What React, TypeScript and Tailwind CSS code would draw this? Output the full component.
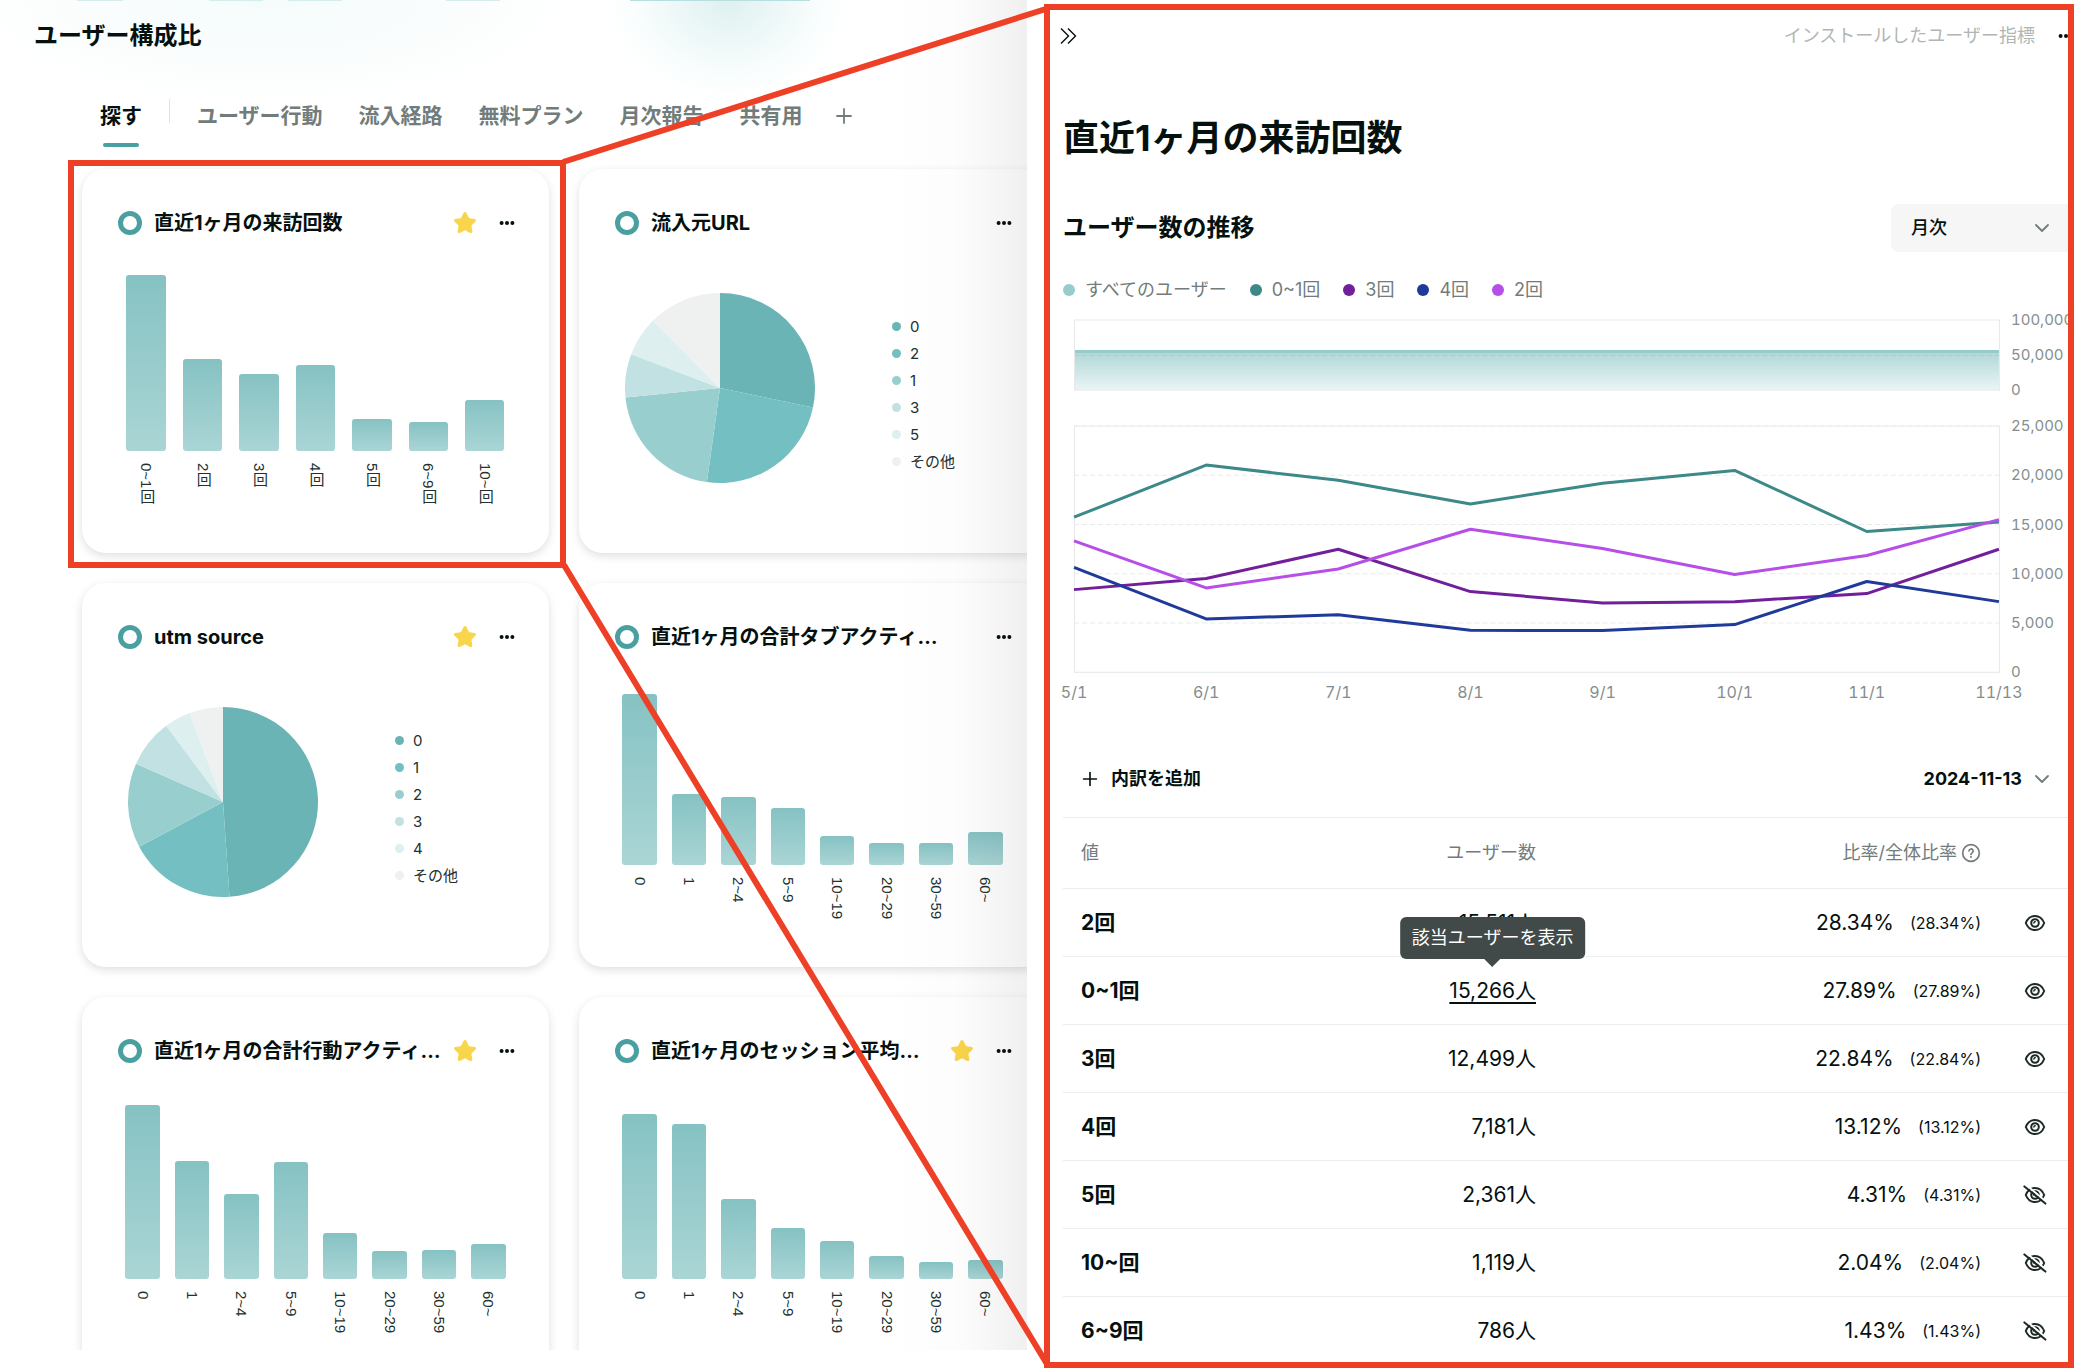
import { ChevronDown, Plus, Star } from 'lucide-react';

type Slice = { label: string; share: number };
type Bar = { label: string; height: number };

type Card = {
  title: string;
  starred: boolean;
  selected?: boolean;
  bars?: Bar[];
  slices?: Slice[];
};

const tabs = ['ユーザー行動', '流入経路', '無料プラン', '月次報告', '共有用'];

const activityLabels = ['0', '1', '2~4', '5~9', '10~19', '20~29', '30~59', '60~'];

const toBars = (heights: number[]) =>
  heights.map((height, i) => ({ label: activityLabels[i], height }));

const cards: Card[] = [
  {
    title: '直近1ヶ月の来訪回数',
    starred: true,
    selected: true,
    bars: [
      { label: '0~1回', height: 176 },
      { label: '2回', height: 92 },
      { label: '3回', height: 77 },
      { label: '4回', height: 86 },
      { label: '5回', height: 32 },
      { label: '6~9回', height: 29 },
      { label: '10~回', height: 51 },
    ],
  },
  {
    title: '流入元URL',
    starred: false,
    slices: [
      { label: '0', share: 28.3 },
      { label: '2', share: 23.9 },
      { label: '1', share: 21.2 },
      { label: '3', share: 7.4 },
      { label: '5', share: 6.7 },
      { label: 'その他', share: 12.5 },
    ],
  },
  {
    title: 'utm source',
    starred: true,
    slices: [
      { label: '0', share: 48.9 },
      { label: '1', share: 18.3 },
      { label: '2', share: 14.4 },
      { label: '3', share: 8.2 },
      { label: '4', share: 4.5 },
      { label: 'その他', share: 5.7 },
    ],
  },
  {
    title: '直近1ヶ月の合計タブアクティ…',
    starred: false,
    bars: toBars([171, 71, 68, 57, 29, 22, 22, 33]),
  },
  {
    title: '直近1ヶ月の合計行動アクティ…',
    starred: true,
    bars: toBars([174, 118, 85, 117, 46, 28, 29, 35]),
  },
  {
    title: '直近1ヶ月のセッション平均…',
    starred: true,
    bars: toBars([165, 155, 80, 51, 38, 23, 17, 19]),
  },
];

const pieColors = ['#6ab4b6', '#74bfc1', '#99cece', '#c2e1e2', '#ddefef', '#eff1f1'];

const series = [
  { name: '0~1回', color: '#3d8888', values: [15750, 21050, 19500, 17100, 19200, 20500, 14300, 15266] },
  { name: '3回', color: '#711f9a', values: [8400, 9520, 12500, 8200, 7050, 7180, 8000, 12499] },
  { name: '4回', color: '#1f3a99', values: [10650, 5420, 5860, 4270, 4240, 4850, 9220, 7181] },
  { name: '2回', color: '#b64ee8', values: [13350, 8570, 10500, 14530, 12570, 9930, 11860, 15511] },
];

const dates = ['5/1', '6/1', '7/1', '8/1', '9/1', '10/1', '11/1', '11/13'];

const rows = [
  { name: '2回', users: '15,511', ratio: '28.34%', visible: true },
  { name: '0~1回', users: '15,266', ratio: '27.89%', visible: true, hovered: true },
  { name: '3回', users: '12,499', ratio: '22.84%', visible: true },
  { name: '4回', users: '7,181', ratio: '13.12%', visible: true },
  { name: '5回', users: '2,361', ratio: '4.31%', visible: false },
  { name: '10~回', users: '1,119', ratio: '2.04%', visible: false },
  { name: '6~9回', users: '786', ratio: '1.43%', visible: false },
];

function Dots() {
  return (
    <svg width="20" height="20" viewBox="0 0 20 20" fill="#05110f">
      <circle cx="4.6" cy="10" r="2" />
      <circle cx="10" cy="10" r="2" />
      <circle cx="15.4" cy="10" r="2" />
    </svg>
  );
}

function EyeIcon({ visible }: { visible: boolean }) {
  return (
    <svg width="24" height="24" viewBox="0 0 24 24" fill="none" stroke="#1c2927" strokeWidth="2" strokeLinecap="round">
      <path d="M2.8 12C4.6 7.4 8 4.9 12 4.9s7.4 2.5 9.2 7.1c-1.8 4.6-5.2 7.1-9.2 7.1S4.6 16.6 2.8 12Z" />
      <circle cx="12" cy="12" r="3.8" />
      <path d="M10.9 12c0-.9.5-1.3 1.3-1.3" strokeWidth="1.5" />
      {!visible && (
        <>
          <path d="M3.2 1.8 23 18.8" stroke="#fff" strokeWidth="2" />
          <path d="M1.4 3.4 22.4 20.6" />
        </>
      )}
    </svg>
  );
}

function BarChart({ bars }: { bars: Bar[] }) {
  return (
    <div className="mt-3 flex px-9">
      {bars.map((bar) => (
        <div key={bar.label} className="flex flex-1 flex-col items-center">
          <div className="flex h-[204px] w-[70%] items-end">
            <div
              className="w-full rounded-[3px] bg-linear-to-b from-[#86c2c3] to-[#aad5d5]"
              style={{ height: bar.height }}
            />
          </div>
          <span className="mt-3 font-['Liberation_Sans','Noto_Sans_CJK_JP',sans-serif] text-[15px] leading-5 text-[#22302e] [writing-mode:vertical-rl]">
            {bar.label}
          </span>
        </div>
      ))}
    </div>
  );
}

function PieChart({ slices }: { slices: Slice[] }) {
  const point = (percent: number) => {
    const angle = (percent / 100) * Math.PI * 2;
    return `${95 + 95 * Math.sin(angle)} ${95 - 95 * Math.cos(angle)}`;
  };
  let start = 0;

  return (
    <div className="mt-[58px] flex items-start pl-[46px]">
      <svg width="190" height="190" viewBox="0 0 190 190">
        {slices.map((slice, i) => {
          const end = start + slice.share;
          const d = `M95 95 L${point(start)} A95 95 0 0 1 ${point(end)} Z`;
          start = end;
          return <path key={slice.label} d={d} fill={pieColors[i]} />;
        })}
      </svg>
      <ul className="mt-5 ml-[77px]">
        {slices.map((slice, i) => (
          <li key={slice.label} className="flex items-center gap-[9px] text-[15px] leading-[27px] text-[#22302e]">
            <span className="size-[9px] rounded-full" style={{ backgroundColor: pieColors[i] }} />
            {slice.label}
          </li>
        ))}
      </ul>
    </div>
  );
}

function MetricCard({ card }: { card: Card }) {
  return (
    <article className="relative h-96 rounded-3xl bg-white pt-[42px] shadow-[0_3px_10px_rgba(0,0,0,0.13)]">
      <header className="flex h-6 items-center pr-8 pl-9">
        <span className="size-6 shrink-0 rounded-full border-[5px] border-[#4a9fa1]" />
        <h2 className="ml-3 flex-1 truncate text-xl leading-7 font-bold">{card.title}</h2>
        {card.starred && (
          <button type="button" aria-label="お気に入り" className="shrink-0">
            <Star size={24} fill="#f9d54c" stroke="#f9d54c" />
          </button>
        )}
        <button type="button" aria-label="メニュー" className="ml-5 shrink-0">
          <Dots />
        </button>
      </header>
      {card.bars && <BarChart bars={card.bars} />}
      {card.slices && <PieChart slices={card.slices} />}
      {card.selected && (
        <div className="pointer-events-none absolute -top-[9px] -right-[17px] -bottom-[15px] -left-[14px] z-10 border-6 border-[#ed4027]" />
      )}
    </article>
  );
}

function Dashboard() {
  return (
    <section className="relative mb-[18px] min-w-0 flex-[1027] overflow-hidden bg-[radial-gradient(ellipse_125px_100px_at_728px_0px,#def0f0,#eff8f8_45%,#fbfefe_80%,transparent),radial-gradient(ellipse_320px_110px_at_270px_0px,#f5fbfb,transparent)]">
      <div className="flex h-px">
        <span className="ml-[77px] w-[46px] bg-[#d5eded]" />
        <span className="ml-[86px] w-[54px] bg-[#d5eded]" />
        <span className="ml-[25px] w-[54px] bg-[#d5eded]" />
        <span className="ml-[104px] w-[54px] bg-[#d5eded]" />
        <span className="ml-[130px] w-[180px] bg-[#b7dfdf]" />
      </div>
      <h1 className="mt-[17px] pl-[34px] text-2xl leading-9 font-bold">ユーザー構成比</h1>

      <nav className="mt-[41px] flex h-[52px] items-start pl-[100px] text-[21px] leading-[42px] font-bold text-[#727c7a]">
        <button type="button" className="flex flex-col items-center text-[#05110f]">
          探す
          <span className="mt-[6px] h-1 w-9 rounded-full bg-[#4a9fa1]" />
        </button>
        <span className="mx-[27px] mt-1 h-6 w-px bg-[#dfe2e2]" />
        <div className="flex gap-9">
          {tabs.map((tab) => (
            <button key={tab} type="button">
              {tab}
            </button>
          ))}
        </div>
        <button type="button" aria-label="タブを追加" className="ml-[29px] flex h-[42px] items-center">
          <Plus size={24} strokeWidth={1.8} />
        </button>
      </nav>

      <div className="mt-[22px] -mr-[19px] ml-[82px] grid grid-cols-2 gap-[30px]">
        {cards.map((card) => (
          <MetricCard key={card.title} card={card} />
        ))}
      </div>
      <div className="pointer-events-none absolute inset-y-0 right-0 w-[140px] bg-linear-to-r from-transparent via-black/1 to-black/6" />
    </section>
  );
}

function TrendChart() {
  const x = (i: number) => 11 + i * 132;
  const y = (value: number) => 364 - (value / 25000) * 246;
  const ticks = [25000, 20000, 15000, 10000, 5000, 0];

  return (
    <svg className="mt-1 w-full overflow-visible tabular-nums" viewBox="0 0 1012 396" fill="#858e8c">
      <defs>
        <linearGradient id="all-users" x1="0" y1="0" x2="0" y2="1">
          <stop offset="0" stopColor="#afd6d6" />
          <stop offset="1" stopColor="#eaf5f5" />
        </linearGradient>
      </defs>

      <rect x="11" y="43" width="924" height="39" fill="url(#all-users)" />
      <path d="M11 43.5H935" stroke="#94cccc" strokeWidth="3" />
      <path d="M11 47.5H935" stroke="#a3d0d0" strokeDasharray="5 3" />
      <rect x="11.5" y="12" width="924" height="70" fill="none" stroke="#e7e9e9" />
      {['100,000', '50,000', '0'].map((label, i) => (
        <text key={label} x="947" y={17 + i * 35} className="text-[15px]">
          {label}
        </text>
      ))}

      <rect x="11.5" y="118" width="924" height="246" fill="none" stroke="#e7e9e9" />
      {ticks.map((tick) => (
        <g key={tick}>
          <path d={`M11 ${y(tick)}H935`} stroke="#e9ebeb" strokeDasharray="5 3" />
          <text x="947" y={y(tick) + 5} className="text-[15px]">
            {tick.toLocaleString('en-US')}
          </text>
        </g>
      ))}
      {series.map((line) => (
        <polyline
          key={line.name}
          points={line.values.map((value, i) => `${x(i)},${y(value)}`).join(' ')}
          fill="none"
          stroke={line.color}
          strokeWidth="3"
          strokeLinejoin="bevel"
        />
      ))}
      {dates.map((date, i) => (
        <text key={date} x={x(i)} y="390" textAnchor="middle" className="text-base">
          {date}
        </text>
      ))}
    </svg>
  );
}

function UserTable() {
  return (
    <table className="w-full table-fixed border-t border-[#eceeee]">
      <colgroup>
        <col />
        <col className="w-[236px]" />
        <col className="w-[445px]" />
        <col className="w-[95px]" />
      </colgroup>
      <thead>
        <tr className="h-[71px] border-b border-[#eceeee] text-lg text-[#727c7a]">
          <th className="pl-[18px] text-left font-normal">値</th>
          <th className="text-right font-normal">ユーザー数</th>
          <th className="font-normal">
            <span className="flex items-center justify-end gap-1">
              比率/全体比率
              <svg width="20" height="20" viewBox="0 0 24 24" fill="none" stroke="currentColor" strokeWidth="2" strokeLinecap="round">
                <circle cx="12" cy="12" r="10" />
                <path d="M9.6 9.6a2.5 2.5 0 1 1 3.7 2.2c-.8.5-1.3 1-1.3 1.9" />
                <path d="M12 16.8h.01" strokeWidth="2.4" />
              </svg>
            </span>
          </th>
          <th aria-label="表示" />
        </tr>
      </thead>
      <tbody>
        {rows.map((row) => (
          <tr key={row.name} className="h-[68px] border-b border-[#eceeee] text-[21px] leading-7">
            <th className="pl-[18px] text-left font-bold">{row.name}</th>
            <td className="text-right">
              <span className="relative inline-block">
                <a href="#users" className={row.hovered ? 'underline decoration-2 underline-offset-4' : ''}>
                  {row.users}人
                </a>
                {row.hovered && (
                  <span
                    role="tooltip"
                    className="absolute bottom-full left-1/2 mb-[18px] -translate-x-1/2 rounded-md bg-[#414a48] px-3 py-[7px] text-lg leading-7 whitespace-nowrap text-white"
                  >
                    該当ユーザーを表示
                    <svg className="absolute top-full left-1/2 -translate-x-1/2" width="16" height="8" viewBox="0 0 16 8" fill="#414a48">
                      <path d="M0 0h16L8 8Z" />
                    </svg>
                  </span>
                )}
              </span>
            </td>
            <td>
              <span className="flex items-center justify-end gap-4">
                {row.ratio}
                <span className="text-base">({row.ratio})</span>
              </span>
            </td>
            <td className="pl-[42px]">
              <button type="button" aria-label={row.visible ? '非表示にする' : '表示する'} className="block">
                <EyeIcon visible={row.visible} />
              </button>
            </td>
          </tr>
        ))}
      </tbody>
    </table>
  );
}

function DetailPanel() {
  return (
    <section className="mt-1 mr-[14px] ml-[17px] min-w-0 flex-[1018] overflow-hidden border-6 border-[#ed4027] bg-white">
      <div className="-mr-2 pl-[13px]">
        <header className="flex h-[52px] items-center justify-between">
          <button type="button" aria-label="閉じる" className="-ml-1">
            <svg width="20" height="20" viewBox="0 0 20 20" fill="none" stroke="#05110f" strokeWidth="1.4">
              <path d="m2 2.5 7.5 7.5L2 17.5M9 2.5l7.5 7.5L9 17.5" />
            </svg>
          </button>
          <div className="flex items-center gap-[21px] text-lg text-[#b0b6b4]">
            インストールしたユーザー指標
            <button type="button" aria-label="メニュー">
              <Dots />
            </button>
          </div>
        </header>

        <h1 className="mt-[49px] text-4xl leading-[54px] font-bold">直近1ヶ月の来訪回数</h1>

        <div className="mt-[39px] flex h-12 items-center justify-between">
          <h2 className="text-2xl font-bold">ユーザー数の推移</h2>
          <div className="relative flex items-center">
            <select
              aria-label="集計単位"
              className="h-12 w-[185px] appearance-none rounded-lg bg-[#f6f6f6] pl-5 text-lg font-medium"
            >
              <option>月次</option>
            </select>
            <ChevronDown size={24} strokeWidth={1.8} className="pointer-events-none absolute right-[22px] text-[#727c7a]" />
          </div>
        </div>

        <ul className="mt-6 flex h-7 items-center gap-[23px] text-lg text-[#727c7a]">
          {[{ name: 'すべてのユーザー', color: '#96cccc' }, ...series].map((item) => (
            <li key={item.name} className="flex items-center gap-[10px]">
              <span className="size-3 rounded-full" style={{ backgroundColor: item.color }} />
              {item.name}
            </li>
          ))}
        </ul>

        <TrendChart />

        <div className="mt-[37px] flex h-[76px] items-center justify-between text-lg font-bold">
          <button type="button" className="flex items-center gap-[10px] pl-4">
            <Plus size={22} strokeWidth={1.8} />
            内訳を追加
          </button>
          <button type="button" className="mr-[22px] flex items-center gap-2">
            2024-11-13
            <ChevronDown size={24} strokeWidth={1.8} className="text-[#727c7a]" />
          </button>
        </div>

        <UserTable />
      </div>
    </section>
  );
}

export default function App() {
  return (
    <main className="relative flex h-screen overflow-hidden bg-white font-[Inter,'Noto_Sans_CJK_JP',sans-serif] text-[#05110f]">
      <Dashboard />
      <DetailPanel />
      {/* zoom-in guides from the selected card to the panel */}
      <svg
        className="pointer-events-none absolute inset-0 size-full"
        viewBox="0 0 2088 1368"
        preserveAspectRatio="none"
        stroke="#ed4027"
        strokeWidth="6"
      >
        <path d="M563 162 1049 8M564 565 1047 1364" />
      </svg>
    </main>
  );
}
